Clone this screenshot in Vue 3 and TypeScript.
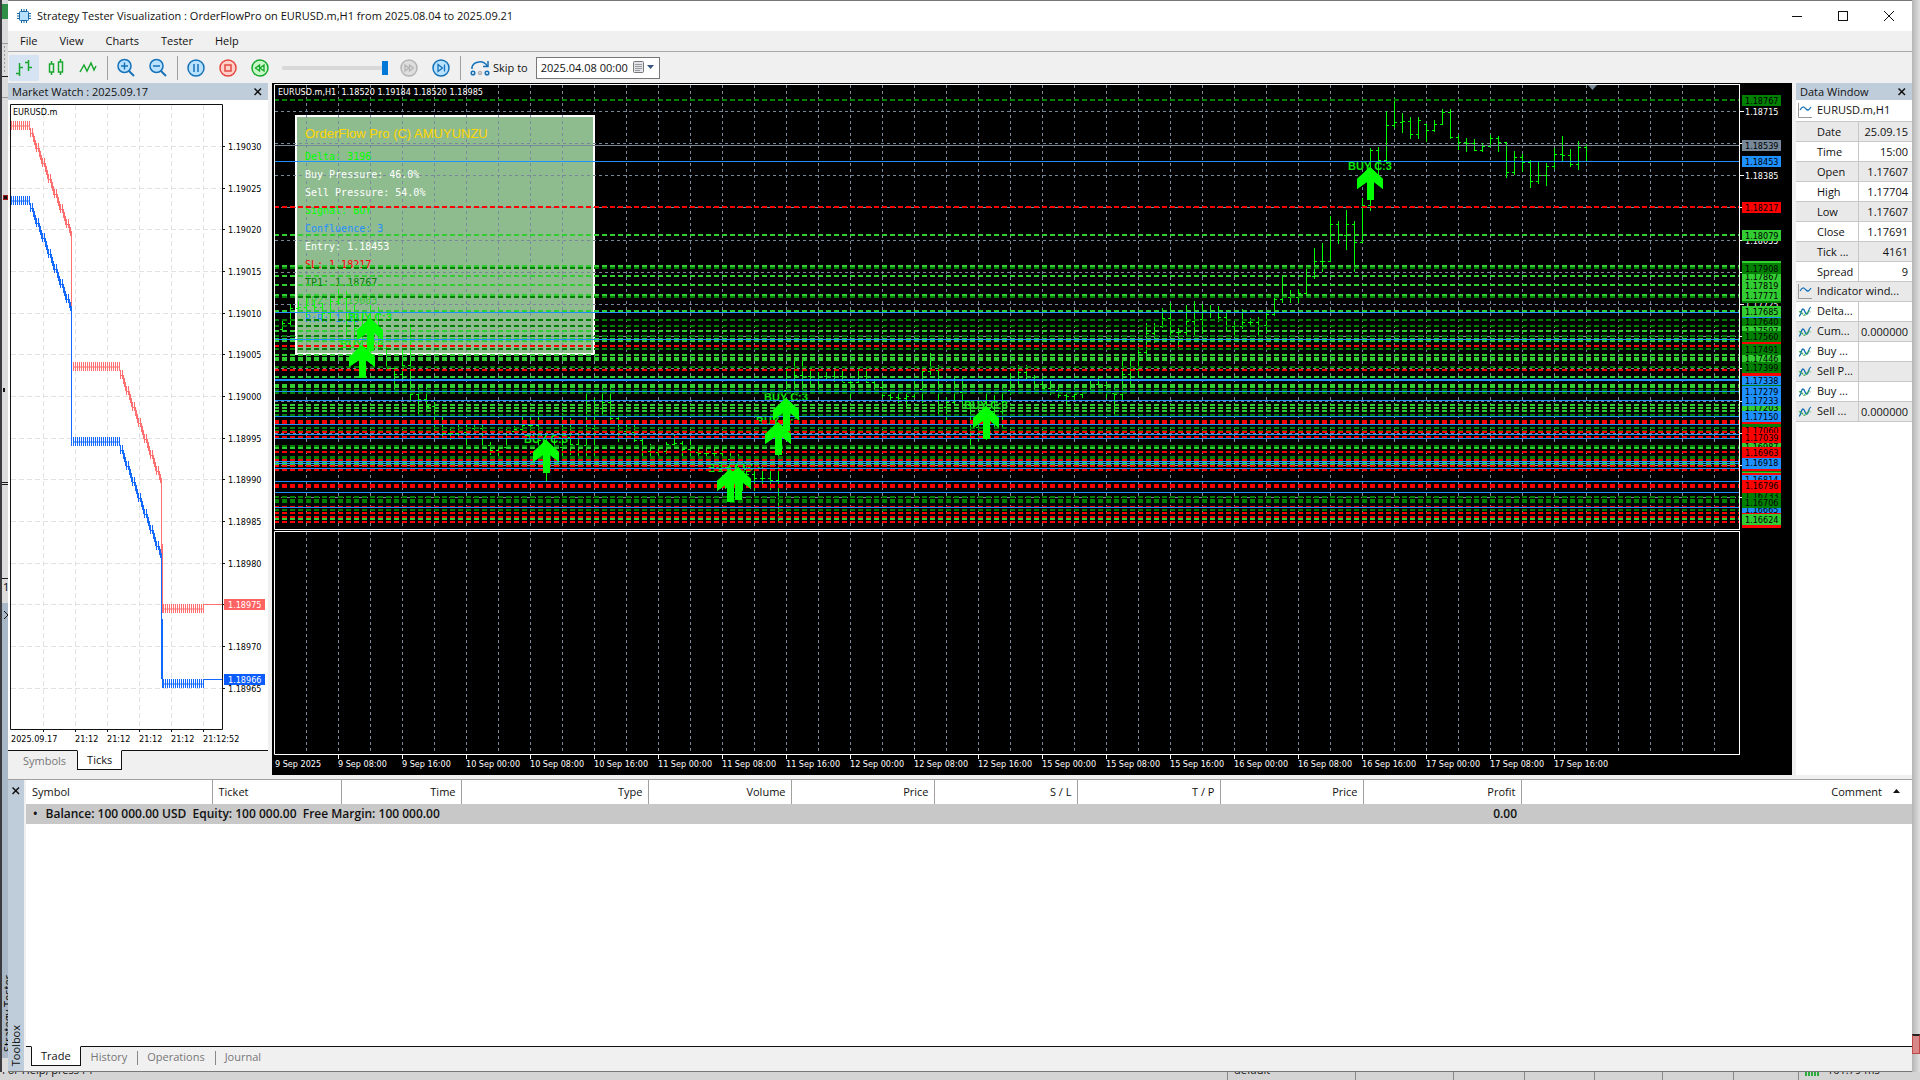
<script setup lang="ts">
import { ref } from 'vue'

type Level = [y: number, color: string]
type Badge = [top: number, bottom: number, color: string, center: number, label: string]

const LIME = '#32cd32'
const GREEN = '#008000'
const RED = '#ff0000'
const BLUE = '#1e90ff'
const SLATE = '#778899'

const speed = ref(100)
const skipDate = ref('2025.04.08 00:00')

/* Market watch tick chart */
const watchPrices = [
  '1.19030', '1.19025', '1.19020', '1.19015', '1.19010', '1.19005', '1.19000',
  '1.18995', '1.18990', '1.18985', '1.18980', '1.18975', '1.18970', '1.18965',
].map((label, i) => ({ label, y: Math.round(146 + i * 41.67) }))
const watchColumns = [43, 75, 107, 139, 171, 203]
const watchTimes = [
  { x: 11, label: '2025.09.17' },
  { x: 75, label: '21:12' },
  { x: 107, label: '21:12' },
  { x: 139, label: '21:12' },
  { x: 171, label: '21:12' },
  { x: 203, label: '21:12:52' },
]

function comb(x0: number, x1: number, top: number): string {
  let d = `M${x0} ${top + 5}H${x1}`
  for (let x = x0; x <= x1; x += 2) d += `M${x + 0.5} ${top}V${top + 9}`
  return d
}

/* Falling stretch: a pair of teeth, then a wider drop, every 6px */
function descent(x0: number, y0: number, x1: number, y1: number): string {
  let d = ''
  for (let x = x0; x <= x1; x += 6) {
    const y = Math.round(y0 + ((y1 - y0) * (x - x0)) / (x1 - x0)) - 5
    d += `M${x + 0.5} ${y}V${y + 9}M${x + 0.5} ${y + 5.5}H${x + 3}M${x + 2.5} ${y}V${y + 9}`
    if (x + 5 <= x1) d += `M${x + 3.5} ${y + 5}V${y + 14}M${x + 4.5} ${y + 8}V${y + 17}M${x + 5.5} ${y + 12}V${y + 21}`
  }
  return d
}

function tickPath(a: number, b: number, c: number): string {
  return (
    comb(11, 29, a) + descent(30, a + 12, 71, a + 116) + `M71.5 ${a + 110}V${b + 9}` +
    comb(73, 119, b) + descent(120, b + 13, 161, b + 122) + `M161.5 ${b + 118}V${c}M162.5 ${c - 60}V${c + 9}` +
    comb(163, 203, c) + `M203 ${c + 0.5}H222`
  )
}
const askPath = tickPath(121, 362, 604)
const bidPath = tickPath(196, 437, 679)

/* Main chart grid */
const gridX = Array.from({ length: 90 }, (_, i) => 306.5 + i * 32)
const gridY = [111, 143, 175, 207, 240, 272, 304, 336, 368, 401, 433, 465, 497]

const dashed: Level[] = [
  [100, GREEN], [207, RED], [235, LIME], [266, LIME], [268, GREEN], [276, LIME], [285, LIME],
  [297, GREEN], [295, LIME], [311, LIME], [320, GREEN], [326, GREEN], [331, LIME], [336, GREEN],
  [339, LIME], [341, LIME], [346, RED], [349, GREEN], [355, LIME], [358, LIME], [360, LIME],
  [367, GREEN], [370, RED], [377, LIME], [385, LIME], [387, LIME], [390, GREEN], [393, GREEN],
  [405, LIME], [408, LIME], [411, LIME], [415, GREEN], [421, RED], [423, RED], [428, GREEN],
  [431, GREEN], [432, RED], [437, RED], [446, GREEN], [448, LIME], [452, RED], [457, GREEN],
  [459, GREEN], [460, RED], [462, LIME], [465, LIME], [466, RED], [470, RED], [485, RED],
  [487, RED], [497, GREEN], [500, GREEN], [502, GREEN], [507, RED], [510, GREEN], [513, RED],
  [517, RED], [519, LIME], [522, RED],
]
const solid = [161, 312, 339, 379, 380, 391, 400, 416, 424, 434, 438, 461, 463, 468, 481, 492, 507]

/* Hourly bars: high, low and, where known, close; bars are 8px apart */
const bars: number[][] = [
  [320, 330], [304, 326], [301, 312], [295, 317], [300, 310], [303, 322], [297, 322], [289, 305],
  [291, 335], [305, 345], [310, 350], [305, 352], [307, 350], [345, 368], [367, 392], [350, 380],
  [324, 402], [385, 416], [387, 410], [402, 430], [417, 437], [428, 440], [424, 438], [425, 446],
  [422, 430], [425, 447], [442, 455], [445, 457], [428, 448], [426, 433], [417, 432], [417, 433],
  [410, 447], [433, 481], [437, 462], [413, 457], [418, 455], [433, 457], [393, 457], [398, 457],
  [387, 417], [387, 420], [415, 442], [422, 440], [424, 442], [438, 458], [444, 457], [447, 457],
  [442, 454], [434, 445], [441, 457], [441, 459], [447, 456], [449, 457], [448, 457], [448, 465],
  [452, 467], [454, 470], [467, 477], [470, 491], [467, 485], [470, 490], [443, 523], [367, 390],
  [360, 390], [357, 392], [367, 385], [372, 392], [372, 380], [370, 382], [370, 382], [381, 398],
  [368, 383], [368, 383], [381, 393], [380, 398], [392, 401], [393, 403], [393, 407], [380, 398],
  [367, 403], [353, 375], [365, 416], [397, 423], [377, 406], [377, 407], [403, 445], [413, 441],
  [392, 440], [395, 427], [385, 428], [373, 395], [365, 385], [365, 379], [375, 390], [378, 394],
  [381, 395], [385, 398], [392, 406], [388, 400], [389, 398], [380, 393], [377, 387], [382, 398],
  [387, 416], [360, 400], [360, 388], [346, 377], [323, 357], [323, 343], [308, 328], [303, 335],
  [328, 348], [305, 336], [301, 337], [304, 334], [305, 318], [306, 322], [312, 330], [322, 336],
  [309, 329], [318, 326], [317, 335], [312, 333], [295, 316], [275, 303], [290, 303], [289, 303],
  [268, 296, 276], [248, 279, 261], [243, 272, 261], [216, 262, 224], [221, 244, 235], [210, 250, 224],
  [221, 272, 242], [198, 243, 205], [148, 211, 150], [147, 175, 160], [111, 163, 125], [98, 128, 122],
  [113, 133, 121], [117, 139, 134], [117, 139, 120], [124, 142, 130], [120, 132, 124], [109, 125, 112],
  [109, 139, 137], [135, 150, 142], [138, 152, 143], [139, 151, 150], [143, 152, 146], [135, 147, 138],
  [136, 152, 142], [142, 178, 172], [151, 175, 157], [154, 172, 162], [160, 188, 181], [161, 184, 175],
  [163, 186, 166], [148, 169, 154], [136, 161, 155], [149, 167, 164], [141, 170, 147], [144, 162, 145],
]

function closeOf(i: number): number {
  const bar = bars[i]
  if (bar[2]) return bar[2]
  const next = bars[i + 1] ?? bar
  const mid = Math.round((Math.max(bar[0], next[0]) + Math.min(bar[1], next[1])) / 2)
  return Math.min(bar[1], Math.max(bar[0], mid))
}
const barPath = bars
  .map((bar, i) => {
    const x = 282 + i * 8
    const open = i ? closeOf(i - 1) : 329
    const o = Math.min(bar[1], Math.max(bar[0], open))
    return `M${x + 0.5} ${bar[0]}V${bar[1]}M${x - 2} ${o + 0.5}H${x}M${x + 1} ${closeOf(i) + 0.5}H${x + 3}`
  })
  .join('')

const signals = [
  [362, 345], [370, 318], [546, 440], [730, 469], [738, 467], [778, 422], [786, 398], [986, 406], [1370, 167],
]

const info = [
  { text: 'Delta: 3196', color: '#00ff00' },
  { text: 'Buy Pressure: 46.0%', color: '#ffffff' },
  { text: 'Sell Pressure: 54.0%', color: '#ffffff' },
  { text: 'Signal: BUY', color: '#00ff00' },
  { text: 'Confluence: 3', color: BLUE },
  { text: 'Entry: 1.18453', color: '#ffffff' },
  { text: 'SL: 1.18217', color: RED },
  { text: 'TP1: 1.18767', color: GREEN },
  { text: 'TP2: 1.19003', color: LIME },
  { text: 'R:R: 1.33', color: BLUE },
]

const timeLabels = ['9 Sep 08:00', '9 Sep 16:00']
for (const day of [10, 11, 12, 15, 16, 17]) {
  for (const hour of ['00', '08', '16']) timeLabels.push(`${day} Sep ${hour}:00`)
}

const axisPrices = [
  { y: 111, label: '1.18715' },
  { y: 175, label: '1.18385' },
  { y: 240, label: '1.18055' },
  { y: 304, label: '1.17725' },
]
const badges: Badge[] = [
  [95, 106, GREEN, 100, '1.18767'], [140, 151, SLATE, 145, '1.18539'], [156, 167, BLUE, 161, '1.18453'],
  [202, 213, RED, 207, '1.18217'], [230, 241, LIME, 235, '1.18079'], [261, 263, LIME, 266, ''],
  [263, 274, GREEN, 268, '1.17908'], [274, 281, LIME, 276, '1.17867'], [280, 291, LIME, 285, '1.17819'],
  [290, 301, LIME, 295, '1.17771'], [301, 303, GREEN, 297, ''], [306, 317, LIME, 311, '1.17685'],
  [317, 318, BLUE, 312, ''], [318, 326, GREEN, 321, '1.17640'], [326, 331, LIME, 330, '1.17597'],
  [331, 342, GREEN, 336, '1.17560'], [342, 344, RED, 341, ''], [344, 355, GREEN, 349, '1.17491'],
  [355, 362, LIME, 358, '1.17446'], [362, 373, GREEN, 367, '1.17399'], [373, 376, RED, 370, ''],
  [376, 385, BLUE, 380, '1.17338'], [385, 386, GREEN, 385, ''], [386, 397, BLUE, 391, '1.17279'],
  [397, 406, BLUE, 400, '1.17233'], [406, 411, LIME, 407, '1.17203'], [411, 422, BLUE, 416, '1.17150'],
  [422, 424, RED, 422, ''], [424, 427, GREEN, 426, ''], [427, 433, RED, 430, '1.17060'],
  [433, 443, RED, 437, '1.17039'], [443, 447, LIME, 446, '1.16987'], [447, 458, RED, 452, '1.16963'],
  [458, 469, BLUE, 462, '1.16918'], [469, 471, RED, 470, ''], [471, 472, GREEN, 472, ''],
  [472, 473, LIME, 473, ''], [473, 475, RED, 474, ''], [475, 480, BLUE, 479, '1.16814'],
  [480, 493, RED, 485, '1.16796'], [493, 498, GREEN, 495, '1.16733'], [498, 508, GREEN, 502, '1.16706'],
  [508, 513, BLUE, 509, '1.16665'], [513, 514, RED, 513, ''], [514, 525, LIME, 519, '1.16624'],
  [525, 528, RED, 522, ''],
]

const dataRows = [
  ['Date', '25.09.15'], ['Time', '15:00'], ['Open', '1.17607'], ['High', '1.17704'], ['Low', '1.17607'],
  ['Close', '1.17691'], ['Tick ...', '4161'], ['Spread', '9'],
]
const indicatorRows = [
  ['Delta...', ''], ['Cum...', '0.000000'], ['Buy ...', ''], ['Sell P...', ''], ['Buy ...', ''], ['Sell ...', '0.000000'],
]

const columns = [
  { name: 'Symbol', width: 186 }, { name: 'Ticket', width: 129 }, { name: 'Time', width: 120 },
  { name: 'Type', width: 187 }, { name: 'Volume', width: 143 }, { name: 'Price', width: 143 },
  { name: 'S / L', width: 143 }, { name: 'T / P', width: 143 }, { name: 'Price', width: 143 },
  { name: 'Profit', width: 158 }, { name: 'Comment', width: 0 },
]
const statusCells = [1226, 128, 98, 71, 70, 68, 71, 65]
</script>

<template>
  <div class="desktop">
    <div class="behind-left">
      <svg width="8" height="1072">
        <rect x="2" y="4" width="6" height="15" fill="#2f8f46" />
        <path d="M2 43.5H8M2 97.5H8" stroke="#9a9a9a" />
        <path d="M4.5 46V72" stroke="#9a9a9a" stroke-dasharray="2 2" />
        <path d="M2 76.5H8M2 482.5H8M2 484.5H8M2 578.5H8" stroke="#1a1a1a" />
        <rect x="3.500" y="195.500" width="4" height="4" fill="#111" stroke="#a01818" />
        <rect x="3" y="388" width="2" height="4" fill="#111" />
        <text x="3" y="591" class="back-text">1</text>
        <rect x="2" y="603" width="6" height="455" fill="#a9b8c7" />
        <path d="M4 611L8 615L4 619" stroke="#111" fill="none" />
        <text class="back-text" transform="translate(12 1052) rotate(-90)">Strategy Tester</text>
      </svg>
    </div>

    <main class="window">
      <header class="title-bar">
        <svg class="app-icon" width="14" height="16" viewBox="0 0 14 16">
          <path d="M4.500 1V15M7 1V15M9.500 1V15M0 5.500H14M0 8H14M0 10.500H14" stroke="#1468a8" />
          <rect x="2.500" y="3.500" width="9" height="9" rx="1" fill="#b8e0ff" stroke="#1468a8" />
        </svg>
        <h1>Strategy Tester Visualization : OrderFlowPro on EURUSD.m,H1 from 2025.08.04 to 2025.09.21</h1>
        <button class="win-btn" aria-label="Minimize"><svg width="11" height="11"><path d="M0 5.500H10" stroke="#111" /></svg></button>
        <button class="win-btn" aria-label="Maximize"><svg width="11" height="11"><rect x=".5" y=".5" width="9" height="9" fill="none" stroke="#111" /></svg></button>
        <button class="win-btn" aria-label="Close"><svg width="11" height="11"><path d="M0 0L10 10M10 0L0 10" stroke="#111" /></svg></button>
      </header>

      <nav class="menu">
        <button>File</button><button>View</button><button>Charts</button><button>Tester</button><button>Help</button>
      </nav>

      <div class="toolbar">
        <button class="tool active" aria-label="Bar chart">
          <svg width="20" height="20" fill="none" stroke="#18a82e" stroke-width="1.500"><path d="M5.500 5V18M2 15.500H5M6 9.500H9M14.500 2V13M11 4.500H14M15 9.500H18" /></svg>
        </button>
        <button class="tool" aria-label="Candlesticks">
          <svg width="20" height="20" fill="none" stroke="#18a82e" stroke-width="1.500"><path d="M5.500 3V6M5.500 14V17M14.500 1V4M14.500 14V17" /><rect x="3.500" y="6" width="4" height="8" /><rect x="12.500" y="4" width="4" height="10" /></svg>
        </button>
        <button class="tool" aria-label="Line chart">
          <svg width="20" height="20" fill="none" stroke="#18a82e" stroke-width="1.500"><path d="M2 14L6 7L9 13L13 5L16 12L18 8" /></svg>
        </button>
        <span class="divider"></span>
        <button v-for="zoom in ['in', 'out']" :key="zoom" class="tool" :aria-label="'Zoom ' + zoom">
          <svg width="20" height="20" fill="none" stroke="#1672b8" stroke-width="1.500">
            <path d="M12.500 12.500L18 18" stroke-width="2" /><circle cx="8.500" cy="8" r="6.500" fill="#b8e2ff" /><path d="M5 8H12" /><path v-if="zoom === 'in'" d="M8.500 4.500V11.500" />
          </svg>
        </button>
        <span class="divider"></span>
        <button class="tool" aria-label="Pause"><svg width="20" height="20" fill="none" stroke="#1672b8" stroke-width="1.500"><circle cx="10" cy="10" r="8" fill="#b8e2ff" /><path d="M8 6V14M12 6V14" /></svg></button>
        <button class="tool" aria-label="Stop"><svg width="20" height="20" fill="none" stroke="#e04a40" stroke-width="1.500"><circle cx="10" cy="10" r="8" fill="#ffd0ca" /><rect x="7" y="7" width="6" height="6" /></svg></button>
        <button class="tool" aria-label="Slower"><svg width="20" height="20" fill="none" stroke="#18a82e" stroke-width="1.500"><circle cx="10" cy="10" r="8" fill="#c8f8c8" /><path d="M9.500 7L5.500 10L9.500 13ZM14 7L10 10L14 13Z" stroke-width="1.300" /></svg></button>
        <input v-model="speed" class="speed" type="range" min="0" max="100" aria-label="Speed" />
        <button class="tool" aria-label="Faster"><svg width="20" height="20" fill="none" stroke="#b4b4b4" stroke-width="1.500"><circle cx="10" cy="10" r="8" fill="#dedede" /><path d="M6 7L10 10L6 13ZM10.500 7L14.500 10L10.500 13Z" stroke-width="1.300" /></svg></button>
        <button class="tool" aria-label="Step"><svg width="20" height="20" fill="none" stroke="#1672b8" stroke-width="1.500"><circle cx="10" cy="10" r="8" fill="#b8e2ff" /><path d="M7 6.500L11.500 10L7 13.500ZM13.500 6.500V13.500" stroke-width="1.300" /></svg></button>
        <span class="divider"></span>
        <button class="skip">
          <svg width="20" height="20" fill="none" stroke="#1672b8" stroke-width="1.500"><path d="M2 11V9A8 7 0 0 1 17 8M18 3V8.500H13" /><circle cx="3" cy="15" r="1.800" /><circle cx="10" cy="15" r="1.500" stroke="#b4b4b4" /><circle cx="17" cy="15" r="1.800" /></svg>
          <span>Skip to</span>
        </button>
        <div class="date-box">
          <input v-model="skipDate" type="text" aria-label="Skip to date" />
          <button aria-label="Open calendar">
            <svg width="22" height="13"><rect x=".5" y=".5" width="10" height="11" rx="1" fill="#e4e4ec" stroke="#777" /><path d="M2 3.500H9M2 5.500H9M2 7.500H9M2 9.500H7" stroke="#999" /><path d="M14 4H21L17.500 8Z" fill="#3a5580" /></svg>
          </button>
        </div>
      </div>

      <div class="workspace">
        <section class="watch">
          <div class="panel-head">
            <h2>Market Watch : 2025.09.17</h2>
            <button aria-label="Close Market Watch"><svg width="8" height="8"><path d="M0.500 0.500L7 7M7 0.500L0.500 7" stroke="#111" stroke-width="1.500" /></svg></button>
          </div>
          <svg class="watch-chart" width="260" height="650">
            <g transform="translate(-8 -100)">
              <path v-for="x in watchColumns" :key="x" :d="`M${x + 0.5} 105V729`" stroke="#e2e2e2" stroke-dasharray="5 3" />
              <path v-for="p in watchPrices" :key="p.label" :d="`M11 ${p.y + 0.5}H222`" stroke="#e2e2e2" stroke-dasharray="5 3" />
              <path :d="askPath" stroke="#ff6f6f" fill="none" />
              <path :d="bidPath" stroke="#1269ff" fill="none" />
              <path d="M10.500 104.500H222.500V729.500H10.500Z" stroke="#111" fill="none" />
              <path v-for="p in watchPrices" :key="'t' + p.label" :d="`M223 ${p.y + 0.5}H225`" stroke="#111" />
              <path v-for="x in watchColumns" :key="'t' + x" :d="`M${x + 0.5} 730V732`" stroke="#111" />
              <text x="13" y="115" class="axis">EURUSD.m</text>
              <text v-for="p in watchPrices" :key="'l' + p.label" x="228" :y="p.y + 4" class="axis">{{ p.label === '1.18975' ? '' : p.label }}</text>
              <rect x="224" y="599" width="41" height="11" fill="#ff6262" />
              <text x="228" y="608" class="axis light">1.18975</text>
              <rect x="224" y="674" width="41" height="11" fill="#0a5cff" />
              <text x="228" y="683" class="axis light">1.18966</text>
              <text v-for="t in watchTimes" :key="t.x" :x="t.x" y="742" class="axis">{{ t.label }}</text>
            </g>
          </svg>
          <div class="watch-tabs">
            <button class="tab">Symbols</button><button class="tab current">Ticks</button>
          </div>
        </section>

        <section class="chart" aria-label="EURUSD.m H1 chart">
          <svg class="plot">
            <g transform="translate(-272 -83)">
              <path v-for="x in gridX" :key="x" :d="`M${x} 85V529M${x} 532V754`" stroke="#778899" stroke-dasharray="3 3" />
              <rect x="296" y="116" width="298" height="238" fill="#8fbc8f" stroke="#fff" stroke-width="2" />
              <path v-for="x in gridX.slice(0, 9)" :key="'p' + x" :d="`M${x} 115V354`" stroke="#7b8ba0" stroke-dasharray="3 3" />
              <path v-for="y in gridY" :key="y" :d="`M275 ${y + 0.5}H3000`" stroke="#778899" stroke-dasharray="3 3" />
              <text x="305" y="138" class="robot">OrderFlow Pro (C) AMUYUNZU</text>
              <text v-for="(row, i) in info" :key="row.text" x="305" :y="160 + i * 18" class="info" :fill="row.color">{{ row.text }}</text>
              <path v-for="(s, i) in signals" :key="'a' + i" :d="`M${s[0]} ${s[1]}l13 12v10l-9 -7v18h-7v-18l-10 7v-10z`" fill="#00ff00" />
              <text v-for="(s, i) in signals" :key="'b' + i" :x="s[0]" :y="s[1] + 3" class="signal">BUY C:3</text>
              <path :d="barPath" stroke="#00ff00" fill="none" />
              <path v-for="(l, i) in dashed" :key="'d' + i" :d="`M274 ${l[0]}H3000`" :stroke="l[1]" stroke-width="2" stroke-dasharray="5 3" />
              <path v-for="y in solid" :key="'s' + y" :d="`M275 ${y + 0.5}H3000`" stroke="#1e90ff" />
              <path v-for="(s, i) in signals" :key="'c' + i" :d="`M${s[0]} ${s[1]}l13 12v10l-9 -7v18h-7v-18l-10 7v-10z`" fill="#00ff00" />
              <path d="M275 145.500H3000" stroke="#778899" />
              <path d="M1588 85H1597L1592.500 90Z" fill="#778899" />
              <path d="M3000 84.500H274.500V529.500H3000M3000 531.500H274.500V754.500H3000" stroke="#fff" fill="none" />
              <path v-for="(t, i) in timeLabels" :key="'k' + t" :d="`M${338.5 + i * 64} 755V759`" stroke="#fff" />
              <text x="278" y="95" class="axis light">EURUSD.m,H1&#160; 1.18520 1.19184 1.18520 1.18985</text>
              <text x="275" y="767" class="axis light">9 Sep 2025</text>
              <text v-for="(t, i) in timeLabels" :key="t" :x="338 + i * 64" y="767" class="axis light">{{ t }}</text>
            </g>
          </svg>
          <svg class="scale" width="53" height="692">
            <g transform="translate(-1739 -83)">
              <path d="M1739.500 84V530M1739.500 531V755" stroke="#fff" />
              <path v-for="y in gridY" :key="y" :d="`M1740 ${y + 0.5}H1744`" stroke="#fff" />
              <text v-for="p in axisPrices" :key="p.label" x="1745" :y="p.y + 4" class="axis light">{{ p.label }}</text>
              <svg v-for="(b, i) in badges" :key="i" x="1742" :y="b[0]" width="39" :height="b[1] - b[0]">
                <rect width="39" height="20" :fill="b[2]" />
                <text x="3" :y="b[3] - b[0] + 4" class="axis">{{ b[4] }}</text>
              </svg>
            </g>
          </svg>
        </section>

        <aside class="data">
          <div class="panel-head">
            <h2>Data Window</h2>
            <button aria-label="Close Data Window"><svg width="8" height="8"><path d="M0.500 0.500L7 7M7 0.500L0.500 7" stroke="#111" stroke-width="1.500" /></svg></button>
          </div>
          <table>
            <colgroup><col class="name-col" /><col /></colgroup>
            <tbody>
              <tr>
                <th colspan="2"><svg width="16" height="16" fill="none"><path d="M1.500 0V14.500H15" stroke="#999" /><path d="M3 7C6 2 7 4 9 6S12 7 14 4" stroke="#1672b8" stroke-width="1.300" /></svg>EURUSD.m,H1</th>
              </tr>
              <tr v-for="r in dataRows" :key="r[0]"><th class="plain">{{ r[0] }}</th><td>{{ r[1] }}</td></tr>
              <tr>
                <th colspan="2"><svg width="16" height="16" fill="none"><path d="M1.500 0V14.500H15" stroke="#999" /><path d="M3 7C6 2 7 4 9 6S12 7 14 4" stroke="#1672b8" stroke-width="1.300" /></svg>Indicator wind...</th>
              </tr>
              <tr v-for="(r, i) in indicatorRows" :key="i">
                <th><svg width="16" height="16" fill="none" stroke-width="1.300"><path d="M2 12C4 12 4 5 6 5S8 11 10 10S11 4 14 3" stroke="#1672b8" /><path d="M2 8C5 6 5 12 8 11S10 5 14 8" stroke="#2cab3f" stroke-dasharray="2 1" /></svg>{{ r[0] }}</th><td>{{ r[1] }}</td>
              </tr>
            </tbody>
          </table>
        </aside>
      </div>

      <section class="toolbox">
        <div class="rail">
          <button aria-label="Close Toolbox"><svg width="8" height="8"><path d="M0.500 0.500L7 7M7 0.500L0.500 7" stroke="#111" stroke-width="1.500" /></svg></button>
          <span>Toolbox</span>
        </div>
        <div class="trade">
          <table>
            <colgroup><col v-for="(c, i) in columns" :key="i" :style="c.width ? { width: c.width + 'px' } : {}" /></colgroup>
            <thead>
              <tr><th v-for="(c, i) in columns" :key="i">{{ c.name }}<svg v-if="i === 10" width="7" height="4"><path d="M0 4L3.500 0L7 4Z" fill="#111" /></svg></th></tr>
            </thead>
            <tbody>
              <tr>
                <td colspan="9"><span class="bullet">•</span>Balance: 100 000.00 USD&#160; Equity: 100 000.00&#160; Free Margin: 100 000.00</td>
                <td class="profit">0.00</td><td></td>
              </tr>
            </tbody>
          </table>
          <div class="trade-tabs">
            <button class="tab current">Trade</button><button class="tab">History</button><button class="tab">Operations</button><button class="tab">Journal</button>
          </div>
        </div>
      </section>
    </main>

    <div class="behind-right"><span></span></div>

    <footer class="behind-status">
      <span v-for="(w, i) in statusCells" :key="i" :style="{ flexBasis: w + 'px' }">{{ i === 0 ? 'For Help, press F1' : i === 1 ? 'default' : '' }}</span>
      <span class="ping"><svg width="16" height="8"><path d="M1 0V4M4 0V4M7 0V4M10 0V4M13 0V4" stroke="#2cab3f" stroke-width="2" /></svg>101.79 ms</span>
    </footer>
  </div>
</template>

<style>
body {
  margin: 0;
}
</style>

<style scoped>
.desktop {
  display: grid;
  grid-template: minmax(0, 1fr) 8px / 8px minmax(0, 1fr) 8px;
  height: 100vh;
  min-height: 900px;
  overflow: hidden;
  background: #d8d8d8;
  color: #111;
  font: 11px/16px 'Open Sans', 'Noto Sans', sans-serif;
}
button,
input {
  margin: 0;
  padding: 0;
  border: 0;
  background: none;
  color: inherit;
  font: inherit;
}
svg {
  display: block;
  flex: none;
}
h1,
h2 {
  margin: 0;
  font: inherit;
}
.behind-left {
  overflow: hidden;
  border-left: 2px solid #3c3c40;
  box-sizing: border-box;
  background: #dcdcdc;
}
.behind-left svg {
  margin-left: -2px;
}
.back-text {
  font-size: 11px;
}
.window {
  display: flex;
  flex-direction: column;
  border-top: 1px solid #777;
  border-right: 1px solid #666;
  border-bottom: 1px solid #777;
  margin-right: -1px;
  background: #f0f0f0;
}
.title-bar {
  display: flex;
  align-items: center;
  height: 30px;
  background: #fff;
}
.app-icon {
  margin: 0 6px 0 9px;
}
.title-bar h1 {
  flex: 1;
  font-size: 11px;
}
.win-btn {
  display: flex;
  justify-content: center;
  width: 46px;
}
.menu {
  display: flex;
  gap: 22px;
  height: 20px;
  padding-left: 12px;
  border-bottom: 1px solid #a8a8a8;
}
.toolbar {
  display: flex;
  align-items: center;
  height: 31px;
  padding-left: 1px;
}
.tool {
  display: flex;
  align-items: center;
  justify-content: center;
  width: 30px;
  height: 26px;
  margin-right: 2px;
}
.tool.active {
  background: #d5e3f2;
}
.divider {
  width: 1px;
  height: 24px;
  margin: 0 3px 0 2px;
  background: #a0a0a0;
}
.speed {
  appearance: none;
  width: 106px;
  height: 20px;
  margin: 0 6px 0 5px;
}
.speed::-webkit-slider-runnable-track {
  height: 4px;
  border-radius: 1px;
  background: #d8d8d8;
}
.speed::-webkit-slider-thumb {
  appearance: none;
  width: 6px;
  height: 14px;
  margin-top: -5px;
  background: #0078d7;
}
.skip {
  display: flex;
  align-items: center;
  gap: 3px;
  margin: 0 8px 0 6px;
}
.date-box {
  display: flex;
  align-items: center;
  width: 122px;
  height: 20px;
  border: 1px solid #777;
  background: #fff;
}
.date-box input {
  width: 92px;
  padding-left: 4px;
}
.workspace {
  display: flex;
  gap: 4px;
  height: 692px;
}
.watch {
  display: flex;
  flex: none;
  flex-direction: column;
  width: 260px;
}
.panel-head {
  display: flex;
  align-items: center;
  justify-content: space-between;
  height: 17px;
  padding: 0 6px 0 4px;
  background: #bfcddb;
}
.watch-chart {
  background: #fff;
}
.axis {
  font: 9px 'DejaVu Sans Condensed', 'Noto Sans', sans-serif;
  fill: #000;
}
.axis.light {
  fill: #fff;
}
.watch-tabs {
  display: flex;
  height: 20px;
  border-top: 1px solid #111;
}
.tab {
  height: 20px;
  color: #777;
}
.tab.current {
  margin-top: -1px;
  border: 1px solid #111;
  border-top-color: #fff;
  background: #fff;
  color: #111;
}
.watch-tabs .tab {
  padding: 0 11px 0 15px;
}
.watch-tabs .current {
  padding: 0 9px;
}
.chart {
  display: flex;
  flex: 1;
  min-width: 0;
  background: #000;
}
.plot {
  flex: 1;
  min-width: 0;
  height: 692px;
}
.robot {
  font: 13px 'Liberation Sans', Arial, sans-serif;
  fill: #ffd700;
}
.info {
  font: 10px 'DejaVu Sans Mono', monospace;
}
.signal {
  font: bold 11px 'Liberation Sans', Arial, sans-serif;
  fill: #0ee80e;
  text-anchor: middle;
}
.data {
  flex: none;
  width: 116px;
  background: #fff;
}
table {
  width: 100%;
  border-collapse: collapse;
  table-layout: fixed;
}
th {
  font-weight: normal;
}
.data .name-col {
  width: 62px;
}
.data tr:nth-child(even) {
  background: #e9e9e9;
}
.data th,
.data td {
  height: 19px;
  padding: 0;
  border-bottom: 1px solid #c8c8c8;
  white-space: nowrap;
  overflow: hidden;
}
.data tr:first-child th {
  height: 21px;
}
.data th {
  text-align: left;
}
.data th.plain {
  padding-left: 21px;
}
.data th svg {
  display: inline-block;
  margin: 0 4px 0 1px;
  vertical-align: middle;
}
.data td {
  padding-right: 4px;
  border-left: 1px solid #c8c8c8;
  text-align: right;
}
.toolbox {
  display: flex;
  flex: 1;
  min-height: 0;
  margin-top: 4px;
  border-top: 1px solid #a0a0a0;
}
.rail {
  display: flex;
  flex-direction: column;
  align-items: center;
  justify-content: space-between;
  width: 16px;
  padding: 7px 0 5px;
  box-sizing: border-box;
  margin-right: 2px;
  background: #bfcddb;
}
.rail span {
  writing-mode: vertical-rl;
  transform: rotate(180deg);
}
.trade {
  display: flex;
  flex: 1;
  flex-direction: column;
  justify-content: space-between;
  min-width: 0;
  background: #fff;
}
.trade th {
  height: 24px;
  padding: 0 5px 0 6px;
  border-right: 1px solid #a0a0a0;
  text-align: right;
}
.trade th:nth-child(-n + 2) {
  text-align: left;
}
.trade th:last-child {
  padding-right: 12px;
  border: 0;
}
.trade th svg {
  display: inline-block;
  margin-left: 11px;
  vertical-align: 3px;
}
.trade td {
  height: 20px;
  padding: 0;
  background: #c8c8c8;
  font-size: 12px;
  font-weight: 600;
}
.bullet {
  margin: 0 8px 0 7px;
}
.trade .profit {
  padding-right: 4px;
  text-align: right;
}
.trade-tabs {
  display: flex;
  height: 24px;
  padding-left: 5px;
  border-top: 1px solid #111;
  background: #f0f0f0;
}
.trade-tabs .tab {
  padding: 0 10px;
}
.trade-tabs .current {
  padding: 0 9px;
}
.trade-tabs .tab + .tab + .tab {
  background: linear-gradient(#888, #888) 0 4px / 1px 14px no-repeat;
}
.behind-right {
  display: flex;
  align-items: flex-end;
  background: linear-gradient(90deg, #b4b4b4, #e0e0e0);
}
.behind-right span {
  flex: 1;
  height: 17px;
  margin-bottom: 18px;
  border: 1px solid #c04848;
  border-top: 2px solid #222;
  background: #d88888;
}
.behind-status {
  display: flex;
  grid-column: 1 / -1;
  overflow: hidden;
  align-items: flex-end;
  padding-left: 2px;
  background: #d4d4d4;
}
.behind-status span {
  flex: none;
  box-sizing: border-box;
  height: 18px;
  padding-left: 6px;
  border-right: 1px solid #888;
}
.behind-status span:first-child {
  padding: 0;
}
.behind-status .ping {
  display: flex;
  gap: 6px;
  border: 0;
}
.behind-status .ping svg {
  margin-top: 10px;
}
</style>
